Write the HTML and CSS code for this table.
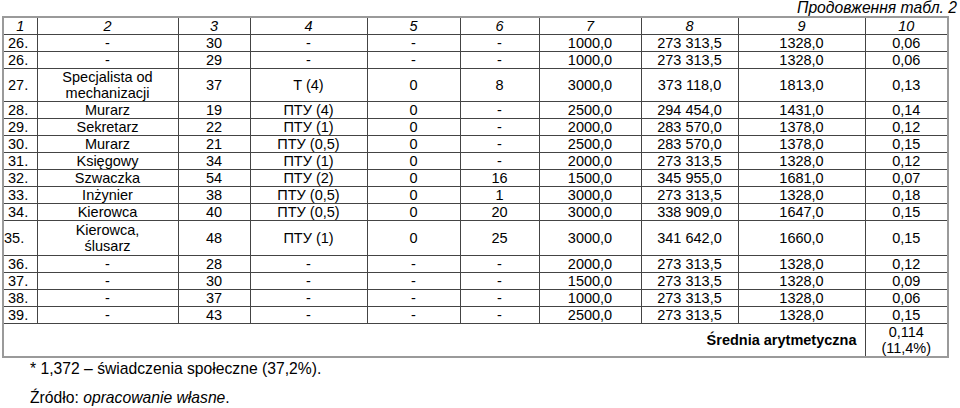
FILE: index.html
```html
<!DOCTYPE html>
<html lang="pl">
<head>
<meta charset="utf-8">
<link rel="stylesheet" href="styles.css">
</head>
<body>
<div class="page">
  <div class="caption">Продовження табл. 2</div>
  <table class="data">
    <colgroup>
      <col class="c1"><col class="c2"><col class="c3"><col class="c4"><col class="c5">
      <col class="c6"><col class="c7"><col class="c8"><col class="c9"><col class="c10">
    </colgroup>
    <thead>
      <tr class="head"><td>1</td><td>2</td><td>3</td><td>4</td><td>5</td><td>6</td><td>7</td><td>8</td><td>9</td><td>10</td></tr>
    </thead>
    <tbody>
      <tr><td class="n">26.</td><td>-</td><td>30</td><td>-</td><td>-</td><td>-</td><td>1000,0</td><td>273 313,5</td><td>1328,0</td><td>0,06</td></tr>
      <tr><td class="n">26.</td><td>-</td><td>29</td><td>-</td><td>-</td><td>-</td><td>1000,0</td><td>273 313,5</td><td>1328,0</td><td>0,06</td></tr>
      <tr><td class="n">27.</td><td>Specjalista od<br>mechanizacji</td><td>37</td><td>T (4)</td><td>0</td><td>8</td><td>3000,0</td><td>373 118,0</td><td>1813,0</td><td>0,13</td></tr>
      <tr><td class="n">28.</td><td>Murarz</td><td>19</td><td>ПТУ (4)</td><td>0</td><td>-</td><td>2500,0</td><td>294 454,0</td><td>1431,0</td><td>0,14</td></tr>
      <tr><td class="n">29.</td><td>Sekretarz</td><td>22</td><td>ПТУ (1)</td><td>0</td><td>-</td><td>2000,0</td><td>283 570,0</td><td>1378,0</td><td>0,12</td></tr>
      <tr><td class="n">30.</td><td>Murarz</td><td>21</td><td>ПТУ (0,5)</td><td>0</td><td>-</td><td>2500,0</td><td>283 570,0</td><td>1378,0</td><td>0,15</td></tr>
      <tr><td class="n">31.</td><td>Księgowy</td><td>34</td><td>ПТУ (1)</td><td>0</td><td>-</td><td>2000,0</td><td>273 313,5</td><td>1328,0</td><td>0,12</td></tr>
      <tr><td class="n">32.</td><td>Szwaczka</td><td>54</td><td>ПТУ (2)</td><td>0</td><td>16</td><td>1500,0</td><td>345 955,0</td><td>1681,0</td><td>0,07</td></tr>
      <tr><td class="n">33.</td><td>Inżynier</td><td>38</td><td>ПТУ (0,5)</td><td>0</td><td>1</td><td>3000,0</td><td>273 313,5</td><td>1328,0</td><td>0,18</td></tr>
      <tr><td class="n">34.</td><td>Kierowca</td><td>40</td><td>ПТУ (0,5)</td><td>0</td><td>20</td><td>3000,0</td><td>338 909,0</td><td>1647,0</td><td>0,15</td></tr>
      <tr class="tall"><td class="n">35.</td><td>Kierowca,<br>ślusarz</td><td>48</td><td>ПТУ (1)</td><td>0</td><td>25</td><td>3000,0</td><td>341 642,0</td><td>1660,0</td><td>0,15</td></tr>
      <tr><td class="n">36.</td><td>-</td><td>28</td><td>-</td><td>-</td><td>-</td><td>2000,0</td><td>273 313,5</td><td>1328,0</td><td>0,12</td></tr>
      <tr><td class="n">37.</td><td>-</td><td>30</td><td>-</td><td>-</td><td>-</td><td>1500,0</td><td>273 313,5</td><td>1328,0</td><td>0,09</td></tr>
      <tr><td class="n">38.</td><td>-</td><td>37</td><td>-</td><td>-</td><td>-</td><td>1000,0</td><td>273 313,5</td><td>1328,0</td><td>0,06</td></tr>
      <tr><td class="n">39.</td><td>-</td><td>43</td><td>-</td><td>-</td><td>-</td><td>2500,0</td><td>273 313,5</td><td>1328,0</td><td>0,15</td></tr>
      <tr class="summary"><td colspan="9" class="label">Średnia arytmetyczna</td><td>0,114<br>(11,4%)</td></tr>
    </tbody>
  </table>
  <p class="note">* 1,372 – świadczenia społeczne (37,2%).</p>
  <p class="source">Źródło: <em>opracowanie własne</em>.</p>
</div>
</body>
</html>
```
FILE: styles.css
```css
html, body {
  margin: 0;
  padding: 0;
  background: #ffffff;
}
body {
  font-family: "Liberation Sans", Arial, sans-serif;
  font-size: 15.7px;
  color: #000000;
}
.page {
  width: 960px;
  padding: 0 0 0 2px;
  box-sizing: border-box;
}
.caption {
  font-style: italic;
  text-align: right;
  line-height: 16px;
  padding-right: 3px;
}
.data {
  border-collapse: collapse;
  table-layout: fixed;
  width: 945px;
  border: 2px solid #9a9a9a;
  font-family: "Liberation Sans", Arial, sans-serif;
  font-size: 14.5px;
}
.c1 { width: 34px; }
.c2 { width: 141px; }
.c3 { width: 72px; }
.c4 { width: 117px; }
.c5 { width: 93px; }
.c6 { width: 79px; }
.c7 { width: 102px; }
.c8 { width: 97px; }
.c9 { width: 127px; }
.c10 { width: 83px; }
.data td {
  border: 1px solid #444444;
  padding: 0;
  line-height: 16px;
  text-align: center;
  vertical-align: middle;
  white-space: nowrap;
}
.data .head td {
  font-style: italic;
}
.data td.n {
  text-align: left;
  padding-left: 4px;
}
.data .tall td {
  padding: 1px 0;
}
.data .summary td {
  padding: 0;
}
.data .summary td.label {
  text-align: right;
  font-weight: bold;
  padding-right: 8px;
}
.note {
  margin: 2px 0 0 28px;
  line-height: 18px;
}
.source {
  margin: 11px 0 0 28px;
  line-height: 18px;
}
.source em {
  font-style: italic;
}
```
